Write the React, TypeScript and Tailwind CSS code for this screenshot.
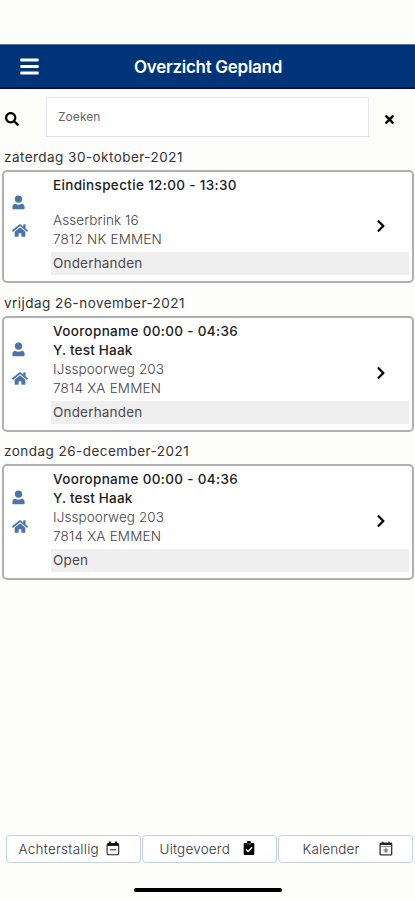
import { useState } from 'react'
import { FaBars, FaSearch, FaTimes, FaHome, FaChevronRight } from 'react-icons/fa'

interface Afspraak {
  datum: string
  titel: string
  naam: string
  straat: string
  plaats: string
  status: string
}

const afspraken: Afspraak[] = [
  {
    datum: 'zaterdag 30-oktober-2021',
    titel: 'Eindinspectie 12:00 - 13:30',
    naam: '',
    straat: 'Asserbrink 16',
    plaats: '7812 NK EMMEN',
    status: 'Onderhanden',
  },
  {
    datum: 'vrijdag 26-november-2021',
    titel: 'Vooropname 00:00 - 04:36',
    naam: 'Y. test Haak',
    straat: 'IJsspoorweg 203',
    plaats: '7814 XA EMMEN',
    status: 'Onderhanden',
  },
  {
    datum: 'zondag 26-december-2021',
    titel: 'Vooropname 00:00 - 04:36',
    naam: 'Y. test Haak',
    straat: 'IJsspoorweg 203',
    plaats: '7814 XA EMMEN',
    status: 'Open',
  },
]

function Persoon() {
  return (
    <svg width="13" height="15" viewBox="0 0 13 15" fill="currentColor">
      <circle cx="6.5" cy="4.1" r="3.7" />
      <path d="M3.4 8.8c1.9 1.2 4.3 1.2 6.2 0 1.9.2 3 1.500 3 3.300v1.100c0 .7-.4 1.100-1.100 1.100H1.500c-.7 0-1.100-.4-1.100-1.100v-1.100c0-1.800 1.100-3.100 3-3.300z" />
    </svg>
  )
}

function KalenderMin() {
  return (
    <svg width="14" height="15" viewBox="0 0 14 15" fill="none" stroke="#222">
      <rect x="1.1" y="2.6" width="11.6" height="11.2" rx="1.6" strokeWidth="1.1" />
      <path d="M1.2 3.6h11.4" stroke="#111" strokeWidth="2.6" />
      <path d="M3.8 0.6v3M10 0.6v3" stroke="#111" strokeWidth="2" />
      <path d="M4 8.7h6" stroke="#444" strokeWidth="1.2" />
    </svg>
  )
}

function KlembordCheck() {
  return (
    <svg width="12" height="15" viewBox="0 0 12 15" fill="none">
      <path d="M1.8 2h2a2.2 2.2 0 0 1 4.4 0h2a1.1 1.1 0 0 1 1.1 1.1v9.8a1.1 1.1 0 0 1-1.1 1.1H1.8a1.1 1.1 0 0 1-1.1-1.1V3.1a1.1 1.1 0 0 1 1.1-1.1z" fill="#000" />
      <path d="M3.6 2.9h4.8" stroke="#777" strokeWidth="0.9" />
      <path d="M3 8.3l2.1 2.2 4-4.3" stroke="#fff" strokeWidth="1.4" />
    </svg>
  )
}

function KalenderPijl() {
  return (
    <svg width="14" height="15" viewBox="0 0 14 15" fill="none" stroke="#333">
      <rect x="1.1" y="2.4" width="11.6" height="11.4" rx="0.6" strokeWidth="1.3" />
      <path d="M1 2.9h12" stroke="#222" strokeWidth="2.2" />
      <path d="M3.8 0.7v2M10 0.7v2" strokeWidth="1.8" />
      <path d="M1.2 5.6h11.4" stroke="#777" strokeWidth="0.9" />
      <path d="M6.9 6.8v4.6M4.4 9h5M5.4 10.8h3" stroke="#666" strokeWidth="1.1" />
    </svg>
  )
}

function AfspraakKaart({ afspraak }: { afspraak: Afspraak }) {
  return (
    <div className="ml-[2px] mr-px flex rounded-[5px] border-2 border-[#b0b0b0] bg-white pb-[6px] pr-[3px] pt-[4px]">
      <div className={`flex w-[47px] shrink-0 flex-col pl-[8px] text-[#4a74ab] ${afspraak.naam ? 'gap-[14px] pt-[20px]' : 'gap-[13px] pt-[19px]'}`}>
        <Persoon />
        <FaHome className="h-[15px] w-[16px]" />
      </div>
      <div className="min-w-0 grow">
        <div className="flex items-center justify-between pl-[2px] pr-[23px] text-[13.5px] leading-[19px] text-[#444]">
          <div>
            <p className="font-medium tracking-[0.34px] text-[#1c1c1c]">{afspraak.titel}</p>
            {afspraak.naam ? (
              <p className="font-medium tracking-[0.2px] text-[#1c1c1c]">{afspraak.naam}</p>
            ) : (
              <div className="h-4" />
            )}
            <p className="font-light tracking-[0.1px]">{afspraak.straat}</p>
            <p className="font-light tracking-[0.2px]">{afspraak.plaats}</p>
          </div>
          <FaChevronRight className="mt-[26px] h-[14px] w-[10px] text-black" />
        </div>
        <div className="mt-[3px] h-[23px] bg-[#efefef] pl-[2px] text-[13.5px] leading-[22px] tracking-[0.18px] text-[#4a4a4a]">
          {afspraak.status}
        </div>
      </div>
    </div>
  )
}

export default function App() {
  const [zoek, setZoek] = useState('')

  const zichtbaar = afspraken.filter((a) =>
    Object.values(a).join(' ').toLowerCase().includes(zoek.toLowerCase())
  )

  return (
    <div className="flex h-[900px] w-[415px] flex-col bg-[#fdfdfb] font-['Inter','Liberation_Sans',sans-serif]">
      <div className="h-[44px] shrink-0" />
      <header className="flex h-[45px] shrink-0 items-center border-b-2 border-t border-b-[#00115f] border-t-[#5874a0] bg-[#003479] text-white">
        <button className="w-[58px] pl-[20px]">
          <FaBars className="mt-px h-[21px] w-[19px]" />
        </button>
        <h1 className="grow pr-[57px] pt-[3px] text-center text-[17px] font-semibold tracking-[-0.28px]">Overzicht Gepland</h1>
      </header>

      {/* Zoekbalk */}
      <div className="flex h-[56px] shrink-0 items-center">
        <FaSearch className="ml-[5px] mt-[3px] h-[14px] w-[14px] text-black" />
        <input
          value={zoek}
          onChange={(e) => setZoek(e.target.value)}
          placeholder="Zoeken"
          className="ml-[27px] h-[40px] w-[323px] border border-[#e2e6ea] bg-white px-[11px] pb-[2px] text-[12px] tracking-[0.05px] outline-none placeholder:text-[#666]"
        />
        <button onClick={() => setZoek('')} className="ml-[14px] mt-[4px]">
          <FaTimes className="h-[13px] w-[13px] text-black" />
        </button>
      </div>

      <main className="grow bg-[#fdfdfb]">
        {zichtbaar.map((a) => (
          <section key={a.datum} className="mb-[7.5px]">
            <h2 className="h-[25px] pl-[4px] text-[13.5px] leading-[24px] tracking-[0.46px] text-[#333]">{a.datum}</h2>
            <AfspraakKaart afspraak={a} />
          </section>
        ))}
      </main>

      <nav className="flex gap-px pl-[5.5px] text-[13.5px] leading-[20px] text-[#333]">
        <button className="flex h-[28px] w-[135px] items-center justify-between rounded-[4px] border border-[#c5cfe2] bg-white pb-px pl-[12px] pr-[20px] font-light tracking-[0.25px]">
          Achterstallig
          <KalenderMin />
        </button>
        <button className="flex h-[28px] w-[135px] items-center justify-between rounded-[4px] border border-[#c5cfe2] bg-white pb-px pl-[17px] pr-[21px] font-light tracking-[0.2px]">
          Uitgevoerd
          <KlembordCheck />
        </button>
        <button className="flex h-[28px] w-[135px] items-center justify-between rounded-[4px] border border-[#c5cfe2] bg-white pb-px pl-[24px] pr-[19px] font-light tracking-[0.15px]">
          Kalender
          <KalenderPijl />
        </button>
      </nav>
      <div className="mb-[8px] ml-[134px] mt-[25px] h-[4px] w-[148px] shrink-0 rounded-full bg-black" />
    </div>
  )
}
